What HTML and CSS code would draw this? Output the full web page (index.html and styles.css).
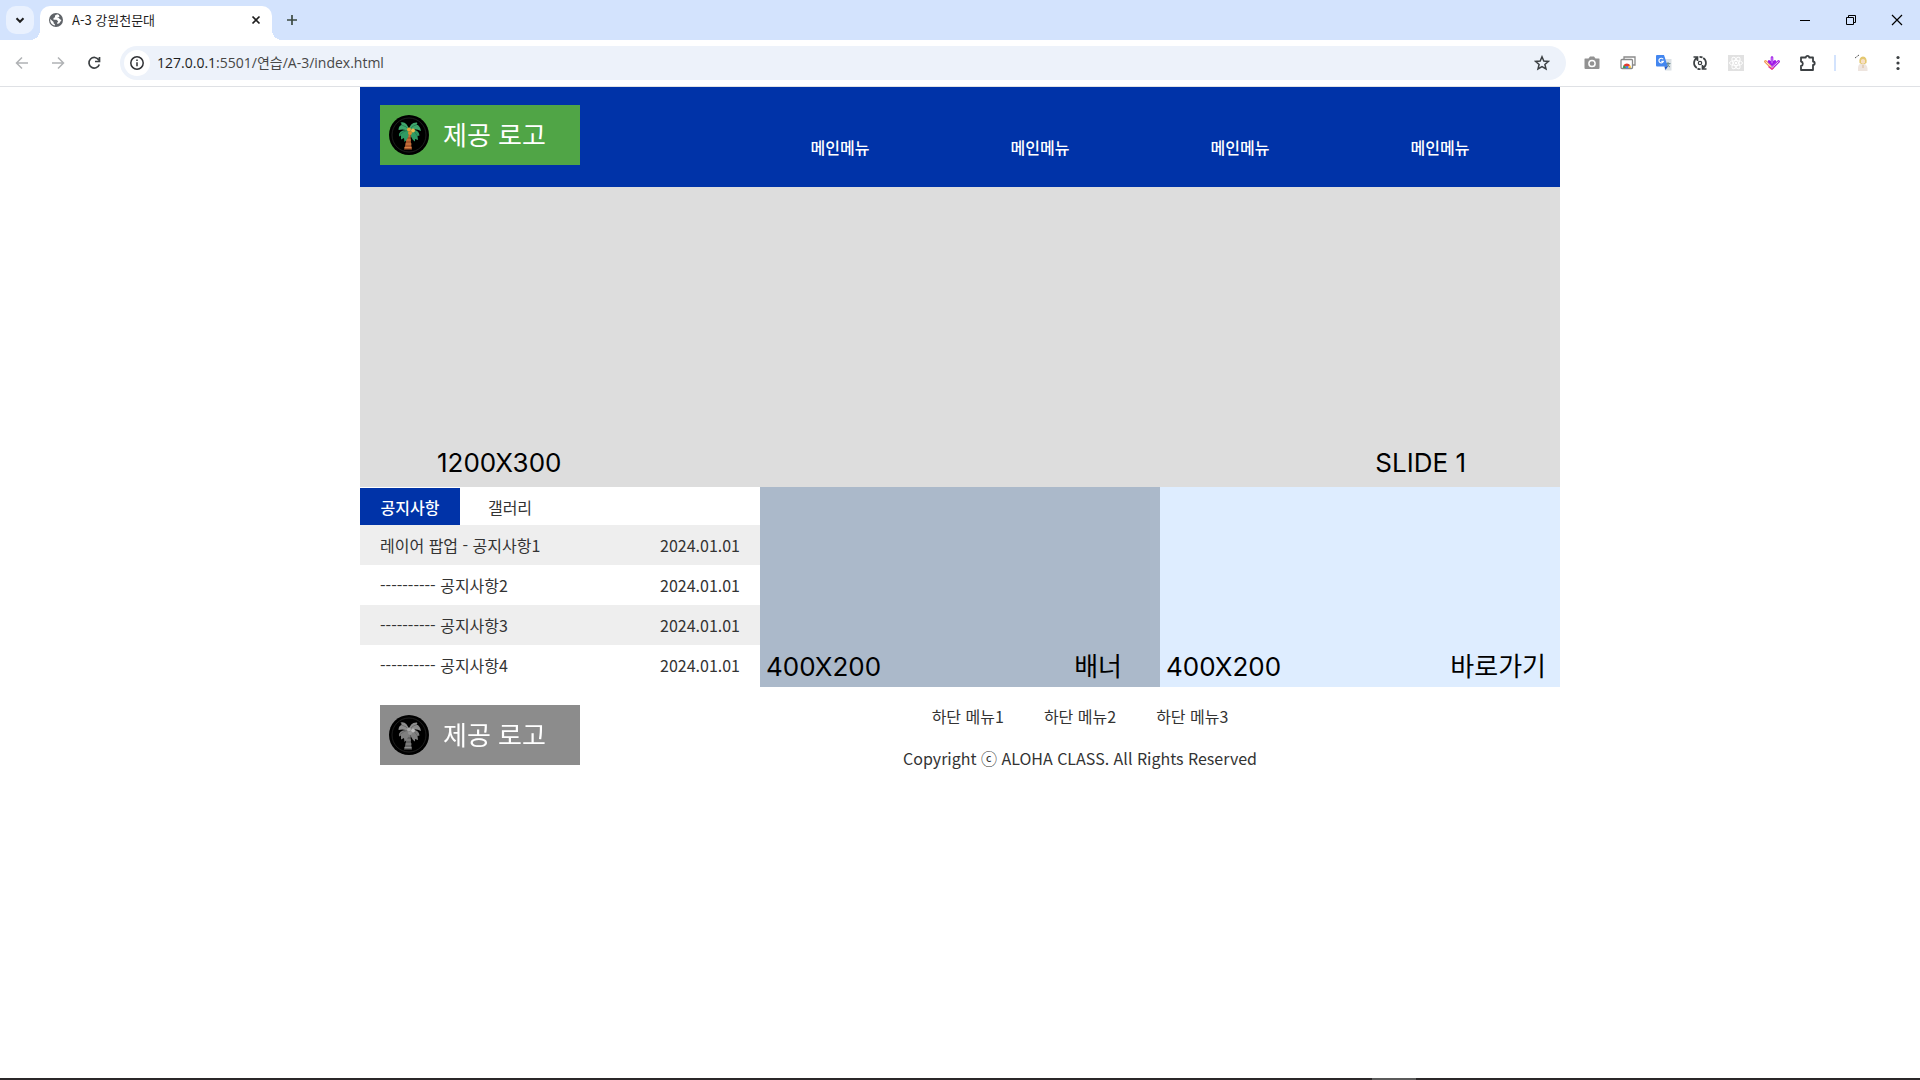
FILE: index.html
```
<!DOCTYPE html>
<html lang="ko">
<head>
  <meta charset="UTF-8">
  <meta name="viewport" content="width=device-width, initial-scale=1.0">
  <title>A-3 강원천문대</title>
  <link rel="stylesheet" href="styles.css">
</head>
<body>

  <!-- browser -->
  <div class="tab-bar">
    <button class="tab-search" aria-label="탭 검색">
      <svg width="10" height="7" viewBox="0 0 10 7"><path d="M1.5 1.3 5 4.8l3.5-3.5" fill="none" stroke="#1f1f1f" stroke-width="2"/></svg>
    </button>
    <div class="tab">
      <svg width="16" height="16" viewBox="0 0 16 16">
        <circle cx="8" cy="8" r="7" fill="#5f6368"/>
        <path d="M9.3 2.2 7 3.4v1.8L5.5 6.1v1.6h3l1.7 1.6-1 1.5.1 1.2 2-.8 2.2-3.3-1.2-.3-1.5-1.6H9.2L10 5.5l1.5-.6-.6-2z" fill="#fff"/>
        <path d="M2.2 6.9 5.6 10v1.3l1.3 1v1.2C4 13 2 10.500 2.200 6.900z" fill="#fff"/>
      </svg>
      <span class="tab-title">A-3 강원천문대</span>
      <button class="tab-close" aria-label="탭 닫기">
        <svg width="10" height="10" viewBox="0 0 10 10"><path d="M1.500 1.500l7 7m0-7-7 7" stroke="#1f1f1f" stroke-width="1.700"/></svg>
      </button>
    </div>
    <button class="tab-new" aria-label="새 탭">
      <svg width="12" height="12" viewBox="0 0 12 12"><path d="M6 1v10M1 6h10" stroke="#3c4a42" stroke-width="1.700"/></svg>
    </button>
    <div class="window-buttons">
      <button aria-label="최소화"><svg width="12" height="12" viewBox="0 0 12 12"><path d="M1 6.500h10" stroke="#000"/></svg></button>
      <button aria-label="이전 크기로"><svg width="12" height="12" viewBox="0 0 12 12"><path d="M1.500 3.500h7v7h-7zM3.500 3V1.500h7v7H9" fill="none" stroke="#000"/></svg></button>
      <button aria-label="닫기"><svg width="12" height="12" viewBox="0 0 12 12"><path d="M1 1l10 10m0-10L1 11" stroke="#000" stroke-width="1.200"/></svg></button>
    </div>
  </div>

  <div class="toolbar">
    <div class="nav-buttons">
      <button aria-label="뒤로"><svg width="14" height="14" viewBox="0 0 14 14"><path d="M13 7H2m5-5.500L1.500 7 7 12.500" fill="none" stroke="#b0b2b5" stroke-width="1.500"/></svg></button>
      <button aria-label="앞으로"><svg width="14" height="14" viewBox="0 0 14 14"><path d="M1 7h11M7 1.500 12.500 7 7 12.500" fill="none" stroke="#b0b2b5" stroke-width="1.500"/></svg></button>
      <button aria-label="새로고침"><svg width="14" height="14" viewBox="0 0 14 14"><path d="M11.800 4A5.300 5.300 0 1 0 12.300 8.500M12.500 1v4.500H8" fill="none" stroke="#3c4043" stroke-width="1.700"/></svg></button>
    </div>
    <div class="address">
      <span class="site-info">
        <svg width="16" height="16" viewBox="0 0 16 16"><circle cx="8" cy="8" r="6.200" fill="none" stroke="#303134" stroke-width="1.500"/><path d="M8 7.200v4M8 4.500v1.500" stroke="#303134" stroke-width="1.500"/></svg>
      </span>
      <a class="url" href="#">127.0.0.1<span>:5501/연습/A-3/index.html</span></a>
      <button class="bookmark" aria-label="북마크">
        <svg width="16" height="16" viewBox="0 0 16 16"><path d="M8 1.800l1.800 4.200 4.600.4-3.500 3 1.100 4.500L8 11.500l-4 2.400 1.100-4.500-3.500-3L6.200 6z" fill="none" stroke="#3c4043" stroke-width="1.500"/></svg>
      </button>
    </div>
    <div class="extensions">
      <button aria-label="캡처"><svg width="16" height="16" viewBox="0 0 16 16"><path d="M1 3.500h3.500L6 1.500h4l1.500 2H15q.5 0 .5.500v9q0 1-1 1h-13q-1 0-1-1V4q0-.5.500-.5z" fill="#929292"/><circle cx="8" cy="8.500" r="3.100" fill="#929292" stroke="#fff" stroke-width="1.500"/></svg></button>
      <button aria-label="원격 데스크톱"><svg width="16" height="16" viewBox="0 0 16 16"><path d="M4 4V2h11v8h-2" fill="none" stroke="#8a8a8a" stroke-width="1.300"/><rect x="1" y="4.500" width="11.500" height="9" rx="1" fill="#fff" stroke="#8a8a8a" stroke-width="1.300"/><path d="M3 13a4 4 0 0 1 1-3.300L7 13z" fill="#2fa24f"/><path d="M3.500 10.200a4 4 0 0 1 6.700 0L8 12H6z" fill="#e33b2e"/><path d="M10.200 10.200q.7 1.200.6 2.800H8z" fill="#f9bd15"/><circle cx="7" cy="12.300" r="1.300" fill="#4285f4"/></svg></button>
      <button aria-label="번역"><svg width="16" height="16" viewBox="0 0 16 16"><path d="M6 4h9.500v11.500H9z" fill="#dce1e5"/><path d="M9.500 8.500h5M12 7v1.500M10 12.500q2.800-1.500 3.300-4M11 9q.8 2 3 3" fill="none" stroke="#6b8d91" stroke-width="1"/><path d="M1 0h7l3.800 11.500H1q-1 0-1-1V1q0-1 1-1z" fill="#4386ef"/><path d="M8.500 11.500h3.300L9.500 15z" fill="#2056c5"/><path d="M7.200 4.300a2.300 2.300 0 1 0 .2 2.100H5.300" fill="none" stroke="#fff" stroke-width="1.200"/></svg></button>
      <button aria-label="동기화"><svg width="16" height="16" viewBox="0 0 16 16"><path d="M4.800 13A5.900 5.900 0 0 1 4.800 3M11.200 3a5.900 5.900 0 0 1 0 10M1.500 2H5.500V6M14.500 14h-4v-4M7.500 1.800q2 0 3 .7M8.500 14.200q-2 0-3-.7" fill="none" stroke="#3c4043" stroke-width="1.700"/><circle cx="8" cy="8" r="1.700" fill="none" stroke="#3c4043" stroke-width="1.200"/></svg></button>
      <button aria-label="React"><svg width="16" height="16" viewBox="0 0 16 16"><path d="M0 0h16v16H0z" fill="#e1e1e1"/><g fill="none" stroke="#fff"><ellipse cx="8" cy="8" rx="6.500" ry="2.500"/><ellipse cx="8" cy="8" rx="6.500" ry="2.500" transform="rotate(60 8 8)"/><ellipse cx="8" cy="8" rx="6.500" ry="2.500" transform="rotate(120 8 8)"/></g><circle cx="8" cy="8" r="1.300" fill="#fff"/></svg></button>
      <button aria-label="다운로드"><svg width="16" height="16" viewBox="0 0 16 16"><g fill="none" stroke-linecap="round"><path d="M1.500 6.500 8 13" stroke="#f29b54" stroke-width="2.800"/><path d="M8 13l6.500-6.500" stroke="#a51ddb" stroke-width="2.800"/><path d="M5 12l3 2 1.500-1.500" stroke="#ec3a8c" stroke-width="1.500"/><path d="M1.800 6.800 8 12.500l6.200-5.700" stroke="#fff" stroke-width=".8"/><path d="M8 2.500V9M5 6.500l3 3 3-3" stroke="#9d15e8" stroke-width="2.600"/><path d="M8 2.800V8" stroke="#e3b9fb" stroke-width=".8"/></g></svg></button>
      <button aria-label="확장 프로그램"><svg width="18" height="18" viewBox="0 0 18 18"><path d="M2 3.500h4.800a1.700 1.700 0 0 1 3.400 0H14v4a1.700 1.700 0 0 1 0 3.400V16H2v-4a2.300 2.300 0 0 0 0-4.500z" fill="none" stroke="#3c4043" stroke-width="1.800" stroke-linejoin="round"/></svg></button>
      <span class="divider"></span>
      <button aria-label="프로필"><svg width="16" height="18" viewBox="0 0 16 18"><path d="M1 4l4-3" stroke="#555" stroke-dasharray="2 1"/><path d="M4 17q-.5-6 2-7h5q3 2 2.500 7z" fill="#eee5df"/><path d="M5.500 9q-1-6 3.500-6.500 4.500.5 3.500 6.500-3.500 2.500-7 0z" fill="#e4c871"/><path d="M7 6q2-2 4 0v2.500q-2 2.500-4 0z" fill="#f7dfc5"/><path d="M9 11v3" stroke="#d8b998"/></svg></button>
      <button aria-label="메뉴"><svg width="4" height="16" viewBox="0 0 4 16" fill="#3c4043"><circle cx="2" cy="2.500" r="1.600"/><circle cx="2" cy="8" r="1.600"/><circle cx="2" cy="13.500" r="1.600"/></svg></button>
    </div>
  </div>

  <!-- shared logo drawing -->
  <svg class="defs" width="0" height="0">
    <symbol id="palm" viewBox="0 0 40 40">
      <circle cx="20" cy="20" r="20" fill="#000"/>
      <circle cx="20" cy="20" r="17" fill="none" stroke="#333" stroke-width=".6"/>
      <path d="M17.500 17h4.500q-1 8 1 17.500h-8q3-9 2.500-17.500z" fill="#a9562c"/>
      <path d="M17.500 21h4M17 25h5M16.500 29h6M15.500 32.500h7" stroke="#d98245"/>
      <path d="M20 15Q18 6 11.500 7.500q1.500 1 1 2.500-3 1-3 5 5-1.500 10.500 1z" fill="#3ea66b"/>
      <path d="M20 15q-11-1-10 6.500l2-1v4l3-1.500.5 4q5-4 4.500-12z" fill="#2f9a63"/>
      <path d="M20 15q1-8 8-7.500 1 1-.5 2 3.500 1 4.500 6.500-5-3-12-1z" fill="#3ea66b"/>
      <path d="M21 15q9-1 9.500 5.500l-2 .5.500 4-3-1v2.500q-5-3-5-11.500z" fill="#2f9a63"/>
      <path d="M12.500 10q5 1 7.500 5M10.500 20q4-4 9-5M28 9.500q-5 1-7 5M28.500 21q-2-5-7-6" fill="none" stroke="#23744c" stroke-width=".7"/>
      <circle cx="20" cy="14.500" r="2" fill="#e9a43a"/>
      <circle cx="24" cy="15.500" r="2" fill="#f0b94c"/>
      <circle cx="21" cy="18" r="2" fill="#d98a2b"/>
    </symbol>
  </svg>

  <!-- page -->
  <div class="container">
    <header>
      <a href="#" class="logo">
        <svg width="40" height="40"><use href="#palm"/></svg>
        <span>제공 로고</span>
      </a>
      <nav>
        <ul class="main-menu">
          <li><a href="#">메인메뉴</a></li>
          <li><a href="#">메인메뉴</a></li>
          <li><a href="#">메인메뉴</a></li>
          <li><a href="#">메인메뉴</a></li>
        </ul>
      </nav>
    </header>

    <section class="slide">
      <span>1200X300</span>
      <span>SLIDE 1</span>
    </section>

    <main>
      <section class="board">
        <div class="board-tabs">
          <button class="active">공지사항</button>
          <button>갤러리</button>
        </div>
        <ul class="notice">
          <li><a href="#">레이어 팝업 - 공지사항1</a><span>2024.01.01</span></li>
          <li><a href="#">---------- 공지사항2</a><span>2024.01.01</span></li>
          <li><a href="#">---------- 공지사항3</a><span>2024.01.01</span></li>
          <li><a href="#">---------- 공지사항4</a><span>2024.01.01</span></li>
        </ul>
      </section>
      <a href="#" class="box banner"><span>400X200</span><span>배너</span></a>
      <a href="#" class="box shortcut"><span>400X200</span><span>바로가기</span></a>
    </main>

    <footer>
      <a href="#" class="logo">
        <svg width="40" height="40"><use href="#palm"/></svg>
        <span>제공 로고</span>
      </a>
      <div class="footer-info">
        <ul class="footer-menu">
          <li><a href="#">하단 메뉴1</a></li>
          <li><a href="#">하단 메뉴2</a></li>
          <li><a href="#">하단 메뉴3</a></li>
        </ul>
        <p>Copyright ⓒ ALOHA CLASS. All Rights Reserved</p>
      </div>
    </footer>
  </div>

  <div class="taskbar"><span></span></div>

</body>
</html>
```
FILE: styles.css
```
* {
  margin: 0;
  padding: 0;
  box-sizing: border-box;
}

body {
  display: flex;
  flex-direction: column;
  min-height: 100vh;
  background: #fff;
  color: #333;
  font-family: "Noto Sans CJK KR", sans-serif;
  font-size: 16px;
  line-height: 24px;
}

ul {
  list-style: none;
}

a {
  color: inherit;
  text-decoration: none;
}

button {
  display: flex;
  align-items: center;
  justify-content: center;
  border: none;
  background: none;
  color: inherit;
  font: inherit;
  cursor: pointer;
}

svg {
  display: block;
  flex-shrink: 0;
}

.defs {
  position: absolute;
}

/* browser */
.tab-bar {
  display: flex;
  height: 40px;
  padding: 6px 0 0 6px;
  background: #d3e3fd;
}

.tab-search {
  width: 28px;
  height: 28px;
  margin-right: 6px;
  border-radius: 10px;
  background: #e9f1fe;
}

.tab {
  position: relative;
  display: flex;
  align-items: center;
  width: 232px;
  height: 34px;
  padding: 0 8px 6px;
  border-radius: 10px 10px 0 0;
  background: #fff;
  color: #1f1f1f;
  font-size: 13px;
}

/* curved feet of the tab */
.tab::before,
.tab::after {
  content: "";
  position: absolute;
  bottom: 0;
  width: 10px;
  height: 10px;
}

.tab::before {
  right: 100%;
  background: radial-gradient(circle at 0 0, transparent 10px, #fff 10px);
}

.tab::after {
  left: 100%;
  background: radial-gradient(circle at 100% 0, transparent 10px, #fff 10px);
}

.tab-title {
  flex: 1;
  margin-left: 8px;
}

.tab-close {
  width: 16px;
  height: 16px;
}

.tab-new {
  width: 28px;
  height: 28px;
  margin-left: 6px;
}

.window-buttons {
  display: flex;
  margin-left: auto;
}

.window-buttons button {
  width: 46px;
  height: 28px;
}

.toolbar {
  display: flex;
  align-items: center;
  height: 47px;
  padding: 0 4px;
  border-bottom: 1px solid #dfe1e5;
  background: #fff;
}

.nav-buttons {
  display: flex;
}

.nav-buttons button {
  width: 36px;
  height: 34px;
}

.address {
  display: flex;
  flex: 1;
  align-items: center;
  height: 34px;
  margin-left: 8px;
  padding: 0 16px 0 4px;
  border-radius: 17px;
  background: #edf2fa;
}

.site-info {
  padding: 5px;
  border-radius: 50%;
  background: #fff;
}

.url {
  flex: 1;
  margin-left: 7px;
  color: #1f1f1f;
  font-family: "Open Sans", "Noto Sans CJK KR", sans-serif;
  font-size: 14px;
}

.url span {
  color: #474747;
}

.extensions {
  display: flex;
  align-items: center;
  margin-left: 8px;
}

.extensions button {
  width: 36px;
  height: 34px;
}

.divider {
  width: 2px;
  height: 16px;
  margin: 0 8px;
  background: #d3e3fd;
}

/* page */
.container {
  flex: 1;
  width: 100%;
  max-width: 1200px;
  margin: 0 auto;
}

header {
  display: flex;
  align-items: center;
  justify-content: space-between;
  height: 100px;
  padding: 0 20px;
  background: #0033a8;
}

.logo {
  display: flex;
  align-items: center;
  gap: 14px;
  width: 200px;
  height: 60px;
  padding-left: 9px;
  background: #50a546;
  color: #fff;
  font-size: 26px;
}

.logo span {
  padding-bottom: 2px;
}

header .logo {
  margin-bottom: 4px;
}

.main-menu {
  display: flex;
  padding-top: 20px;
  color: #fff;
  font-weight: 500;
}

.main-menu li {
  width: 200px;
  text-align: center;
}

.slide,
.box {
  display: flex;
  align-items: flex-end;
  justify-content: space-between;
  color: #000;
  font-family: Inter, "Noto Sans CJK KR", sans-serif;
  font-size: 26px;
  line-height: 40px;
}

.slide {
  height: 300px;
  padding: 0 94px 4px 77px;
  background: #ddd;
}

main {
  display: grid;
  grid-template-columns: repeat(3, 1fr);
}

.board-tabs {
  display: flex;
  padding-top: 1px;
}

.board-tabs button {
  width: 100px;
  height: 37px;
}

.board-tabs .active {
  background: #0033a8;
  color: #fff;
  font-weight: 500;
}

.notice li {
  display: flex;
  align-items: center;
  justify-content: space-between;
  height: 40px;
  padding: 0 20px;
}

.notice li:nth-child(odd) {
  background: #eee;
}

.box {
  height: 200px;
}

.banner {
  padding: 0 38px 0 6px;
  background: #abb9ca;
}

.shortcut {
  padding: 0 14px 0 6px;
  background: #deedff;
}

footer {
  display: flex;
  padding: 18px 0 18px 20px;
}

footer .logo {
  filter: grayscale(1);
}

.footer-info {
  flex: 1;
  margin: -1px 0 0 20px;
  text-align: center;
}

.footer-menu {
  display: flex;
  justify-content: center;
  gap: 40px;
  margin-bottom: 18px;
}

.taskbar {
  height: 2px;
  background: #2b2829;
}

.taskbar span {
  display: block;
  width: 44px;
  height: 2px;
  margin-left: 1372px;
  background: #5b5b5b;
}
```
